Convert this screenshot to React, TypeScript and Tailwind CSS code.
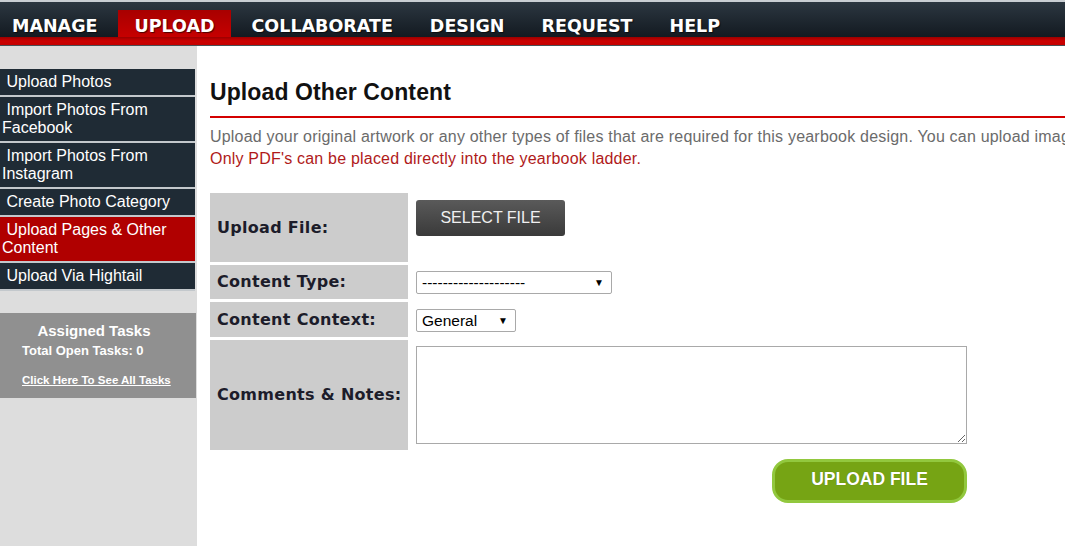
import React from "react";

const navItems = ["MANAGE", "UPLOAD", "COLLABORATE", "DESIGN", "REQUEST", "HELP"];

function Header() {
  return (
    <div className="w-full">
      <div className="h-[2px] bg-[#c9ced3]" />
      <div className="flex h-[35px] items-end bg-gradient-to-b from-[#2c3741] to-[#131a21] pl-[0px]">
        {navItems.map((item, i) => {
          const active = item === "UPLOAD";
          return (
            <div
              key={item}
              className={
                (active
                  ? "bg-gradient-to-b from-[#a80000] to-[#c60000] "
                  : "") +
                (i === 0 ? "pl-[12px] pr-[16px] " : "px-[16px] ") +
                "mr-[5px] h-[27px] pt-[3px] text-[17.5px] font-bold leading-[27px] text-white [font-family:'DejaVu_Sans',Verdana,sans-serif] [text-shadow:1px_1px_1px_rgba(0,0,0,0.6)]"
              }
            >
              {item}
            </div>
          );
        })}
      </div>
      <div className="h-[8px] bg-gradient-to-b from-[#9a0000] via-[#cc0000] to-[#c40000]" />
      <div className="h-[1px] bg-[#4a4f55]" />
    </div>
  );
}

const sideItems: { label: React.ReactNode; active?: boolean }[] = [
  { label: <>&nbsp;Upload Photos</> },
  { label: <>&nbsp;Import Photos From Facebook</> },
  { label: <>&nbsp;Import Photos From Instagram</> },
  { label: <>&nbsp;Create Photo Category</> },
  { label: <>&nbsp;Upload Pages &amp; Other Content</>, active: true },
  { label: <>&nbsp;Upload Via Hightail</> },
];

function Sidebar() {
  return (
    <div className="w-[197px] shrink-0 bg-[#dddddd] pt-[23px] [font-family:'Liberation_Sans',Arial,sans-serif]">
      <div className="w-[195px]">
        {sideItems.map((s, i) => (
          <div
            key={i}
            className={
              (s.active ? "bg-[#b00000] " : "bg-[#1f2b35] ") +
              "border-b-2 border-[#c3c8cc] py-[4px] pl-[2px] pr-[4px] text-[16px] leading-[18px] text-white"
            }
          >
            {s.label}
          </div>
        ))}
      </div>
      <div className="mt-[22px] h-[85px] w-[196px] bg-[#909090] pl-[22px] pt-[9px] text-white">
        <div className="pr-[30px] text-center text-[15px] font-bold leading-[18px]">Assigned Tasks</div>
        <div className="mt-[3px] text-[13px] font-bold leading-[15px]">Total Open Tasks: 0</div>
        <div className="mt-[15px] text-[11.5px] font-bold leading-[14px] underline">Click Here To See All Tasks</div>
      </div>
    </div>
  );
}

function Label({ children }: { children: React.ReactNode }) {
  return (
    <div className="flex items-center bg-[#cccccc] pl-[7px] text-[16px] font-bold tracking-[0.3px] text-[#1c1c2a] [font-family:'DejaVu_Sans',Verdana,sans-serif]">
      {children}
    </div>
  );
}

function FakeSelect({ width, height, text }: { width: string; height: string; text: string }) {
  return (
    <div
      className={
        width +
        " " +
        height +
        " flex items-center justify-between rounded-[2px] border border-[#a9a9a9] bg-white pl-[5px] pr-[7px] text-[15.5px] text-black [font-family:'Liberation_Sans',Arial,sans-serif]"
      }
    >
      <span className="leading-none">{text}</span>
      <span className="text-[10px] leading-none">▼</span>
    </div>
  );
}

function Main() {
  return (
    <div className="flex-1 pl-[13px] pt-[33px] [font-family:'Liberation_Sans',Arial,sans-serif]">
      <div className="border-b-2 border-[#d40000] pb-[10px] text-[23px] font-bold leading-[27px] tracking-[0.1px] text-[#111111]">
        Upload Other Content
      </div>
      <div className="mt-[8px] text-[16px] leading-[22px] tracking-[0.2px]">
        <div className="whitespace-nowrap text-[#6b6b6b]">
          Upload your original artwork or any other types of files that are required for this yearbook design. You can upload imag
        </div>
        <div className="whitespace-nowrap text-[#b01a1a]">Only PDF's can be placed directly into the yearbook ladder.</div>
      </div>

      <div className="mt-[23px] grid w-[760px] grid-cols-[198px_560px] gap-x-[2px] gap-y-[3px]">
        <Label>Upload File:</Label>
        <div className="h-[69px] pl-[6px] pt-[7px]">
          <div className="flex h-[36px] w-[149px] items-center justify-center rounded-[3px] bg-gradient-to-b from-[#5a5a5a] to-[#3a3a3a] pb-[1px] text-[16px] text-[#f0f0f0]">
            SELECT FILE
          </div>
        </div>

        <Label>Content Type:</Label>
        <div className="h-[34px] pl-[6px] pt-[6px]">
          <FakeSelect width="w-[196px]" height="h-[23px]" text="--------------------" />
        </div>

        <Label>Content Context:</Label>
        <div className="h-[35px] pl-[6px] pt-[7px]">
          <FakeSelect width="w-[100px]" height="h-[23px]" text="General" />
        </div>

        <Label>Comments &amp; Notes:</Label>
        <div className="h-[110px] pl-[6px] pt-[6px]">
          <textarea className="block h-[98px] w-[551px] border border-[#a9a9a9] bg-white" />
        </div>
      </div>

      <div className="mt-[9px] flex w-[757px] justify-end">
        <div className="flex h-[44px] w-[195px] items-center justify-center rounded-[16px] border-[3px] border-[#92c83e] bg-[#76a414] pb-[3px] text-[17.5px] font-bold text-white [text-shadow:0_0_1px_rgba(0,0,0,0.3)]">
          UPLOAD FILE
        </div>
      </div>
    </div>
  );
}

export default function App() {
  return (
    <div className="flex h-[546px] w-full flex-col overflow-hidden bg-white">
      <Header />
      <div className="flex flex-1 overflow-hidden">
        <Sidebar />
        <Main />
      </div>
    </div>
  );
}
